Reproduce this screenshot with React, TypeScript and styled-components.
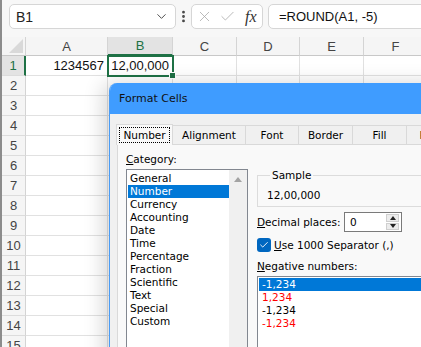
import React from "react";
import styled, { createGlobalStyle } from "styled-components";
import { X, Check, ChevronDown, EllipsisVertical } from "lucide-react";

const GlobalStyle = createGlobalStyle`
  html, body { margin: 0; padding: 0; background: #fff; }
  body { overflow: hidden; }
`;

const GREEN = "#1e7145";
const UI_FONT = `"DejaVu Sans", Tahoma, sans-serif`;

const Window = styled.div`
  position: relative;
  width: 421px;
  height: 347px;
  overflow: hidden;
  background: #fff;
  border-left: 2px solid #8c8c8c;
  box-sizing: border-box;
  font-family: "Liberation Sans", Arial, sans-serif;
  color: #111;
`;

const Toolbar = styled.div`
  display: flex;
  align-items: flex-start;
  height: 37px;
  padding: 4px 0 0 7px;
  box-sizing: border-box;
  background: #f7f7f7;
`;

const Box = styled.div<{ $w: number }>`
  display: flex;
  align-items: center;
  flex: none;
  width: ${p => p.$w}px;
  height: 25px;
  box-sizing: border-box;
  background: #fff;
  border: 1px solid #d6d6d6;
  border-radius: 5px;
  font-size: 14px;
`;

const NameBox = styled(Box)`
  justify-content: space-between;
  padding: 0 6px 0 6px;
  color: #222;
`;

const Dots = styled.div`
  width: 21px;
  height: 25px;
  display: flex;
  align-items: center;
  justify-content: center;
  color: #444;
`;

const FxBox = styled(Box)`
  padding-left: 4px;
  gap: 6px;
  color: #a8a8a8;
`;

const Fx = styled.span`
  margin-left: 3px;
  font-family: "Liberation Serif", "Times New Roman", serif;
  font-style: italic;
  font-size: 16px;
  color: #333;
`;

const FormulaBox = styled(Box)`
  margin-left: 5px;
  padding-left: 10px;
  font-size: 13px;
  color: #111;
`;

const Sheet = styled.div`
  display: grid;
  grid-template-columns: 24px 82px 65px 64px 63px 64px 64px;
  grid-template-rows: 19px repeat(15, 20px);
  font-size: 13px;
`;

const Corner = styled.div`
  position: relative;
  background: #f5f5f5;
  border-right: 1px solid #d4d4d4;
  border-bottom: 1px solid #c8c8c8;
  box-sizing: border-box;
  &::after {
    content: "";
    position: absolute;
    right: 2px;
    bottom: 2px;
    border-style: solid;
    border-width: 0 0 14px 14px;
    border-color: transparent transparent #d9d9d9 transparent;
  }
`;

const ColHead = styled.div<{ $sel?: boolean }>`
  display: flex;
  align-items: center;
  justify-content: center;
  box-sizing: border-box;
  background: ${p => (p.$sel ? "#e3e3e3" : "#f5f5f5")};
  color: ${p => (p.$sel ? GREEN : "#444")};
  border-right: 1px solid #d4d4d4;
  border-bottom: ${p => (p.$sel ? `2px solid ${GREEN}` : "1px solid #c8c8c8")};
`;

const RowHead = styled.div<{ $sel?: boolean }>`
  display: flex;
  align-items: center;
  justify-content: center;
  box-sizing: border-box;
  background: ${p => (p.$sel ? "#e3e3e3" : "#f5f5f5")};
  color: ${p => (p.$sel ? GREEN : "#444")};
  border-right: ${p => (p.$sel ? `2px solid ${GREEN}` : "1px solid #d4d4d4")};
  border-bottom: 1px solid #dcdcdc;
`;

const Cell = styled.div<{ $active?: boolean }>`
  position: relative;
  display: flex;
  align-items: center;
  justify-content: flex-end;
  padding: 0 3px;
  box-sizing: border-box;
  border-right: 1px solid #e1e1e1;
  border-bottom: 1px solid #e1e1e1;
  ${p =>
    p.$active &&
    `
    outline: 2px solid ${GREEN};
    outline-offset: -1px;
    z-index: 1;
    &::after {
      content: "";
      position: absolute;
      right: -4px;
      bottom: -4px;
      width: 5px;
      height: 5px;
      background: ${GREEN};
      border: 1px solid #fff;
    }
  `}
`;

const Dialog = styled.div`
  position: absolute;
  left: 107px;
  top: 83px;
  width: 340px;
  height: 290px;
  background: #f0f0f0;
  border-left: 1px solid #4a9cf5;
  border-top-left-radius: 8px;
  overflow: hidden;
  box-shadow: -6px 0 20px rgba(0, 0, 0, 0.16);
  font-family: ${UI_FONT};
  font-size: 10.5px;
  color: #000;
  z-index: 2;
`;

const TitleBar = styled.div`
  display: flex;
  align-items: center;
  height: 31px;
  padding-left: 9px;
  background: #3f9cff;
  color: #111;
  font-size: 11px;
`;

const Body = styled.div`
  padding: 9px 0 0 7px;
`;

const TabStrip = styled.div`
  display: flex;
  align-items: flex-end;
  height: 21px;
`;

const Tab = styled.div<{ $w: number; $sel?: boolean }>`
  display: flex;
  align-items: center;
  justify-content: center;
  flex: none;
  width: ${p => p.$w}px;
  height: ${p => (p.$sel ? 21 : 19)}px;
  box-sizing: border-box;
  border: 1px solid #d9d9d9;
  border-bottom: none;
  margin-left: -1px;
  background: ${p => (p.$sel ? "#f9f9f9" : "#f0f0f0")};
  margin-bottom: ${p => (p.$sel ? -1 : 0)}px;
  position: relative;
  z-index: ${p => (p.$sel ? 1 : 0)};
  white-space: nowrap;
`;

const Focus = styled.span`
  outline: 1px dotted #000;
  padding: 1px 3px 1px 3px;
`;

const Pane = styled.div`
  display: flex;
  height: 240px;
  padding: 8px 0 0 8px;
  border: 1px solid #d9d9d9;
  background: #f9f9f9;
`;

const LeftCol = styled.div`
  display: flex;
  flex-direction: column;
  width: 122px;
  flex: none;
`;

const Label = styled.div<{ $w?: number }>`
  line-height: 13px;
  height: 13px;
  white-space: nowrap;
  ${p => (p.$w ? `width: ${p.$w}px;` : "")}
`;

const ListBox = styled.div<{ $h: number; $pt: number }>`
  display: flex;
  height: ${p => p.$h}px;
  margin-top: 3px;
  box-sizing: border-box;
  border: 1px solid #828790;
  background: #fff;
  padding: ${p => p.$pt}px 0 0 1px;
`;

const Items = styled.div<{ $w?: number }>`
  display: flex;
  flex-direction: column;
  width: ${p => (p.$w ? `${p.$w}px` : "100%")};
`;

const Item = styled.div<{ $sel?: boolean; $red?: boolean; $pl: number }>`
  height: 13px;
  line-height: 13px;
  padding-left: ${p => p.$pl}px;
  white-space: nowrap;
  background: ${p => (p.$sel ? "#0078d7" : "transparent")};
  color: ${p => (p.$sel ? "#fff" : p.$red ? "#ff0000" : "#000")};
`;

const ScrollBar = styled.div`
  flex: 1;
  margin-top: -2px;
  background: #f0f0f0;
  display: flex;
  justify-content: center;
  padding-top: 7px;
  &::before {
    content: "";
    border-style: solid;
    border-width: 0 4px 5px 4px;
    border-color: transparent transparent #a3a3a3 transparent;
    height: 0;
  }
`;

const RightCol = styled.div`
  display: flex;
  flex-direction: column;
  margin-left: 9px;
  flex: 1;
`;

const Group = styled.fieldset`
  margin: 16px 0 0 0;
  padding: 7px 0 4px 9px;
  min-inline-size: auto;
  border: 1px solid #dcdcdc;
  line-height: 13px;
  & > legend {
    padding: 0 2px;
    margin-left: 3px;
    line-height: 13px;
  }
`;

const FieldRow = styled.div<{ $mt: number }>`
  display: flex;
  align-items: center;
  margin-top: ${p => p.$mt}px;
`;

const Spin = styled.div`
  display: flex;
  align-items: center;
  width: 58px;
  height: 20px;
  box-sizing: border-box;
  border: 1px solid #7a7a7a;
  background: #fff;
  padding-left: 5px;
  justify-content: space-between;
`;

const SpinButtons = styled.div`
  display: flex;
  flex-direction: column;
  width: 13px;
  height: 16px;
  margin-right: 2px;
  gap: 1px;
`;

const SpinButton = styled.div<{ $up?: boolean }>`
  flex: 1;
  display: flex;
  align-items: center;
  justify-content: center;
  background: #ececec;
  border: 1px solid #cfcfcf;
  box-sizing: border-box;
  &::before {
    content: "";
    border-style: solid;
    border-width: ${p => (p.$up ? "0 3.5px 4px 3.5px" : "4px 3.5px 0 3.5px")};
    border-color: ${p =>
      p.$up ? "transparent transparent #222 transparent" : "#222 transparent transparent transparent"};
  }
`;

const CheckBox = styled.div`
  width: 14px;
  height: 14px;
  border-radius: 3px;
  background: #0067c0;
  display: flex;
  align-items: center;
  justify-content: center;
  margin-right: 3px;
  color: #fff;
`;

const categories = [
  "General",
  "Number",
  "Currency",
  "Accounting",
  "Date",
  "Time",
  "Percentage",
  "Fraction",
  "Scientific",
  "Text",
  "Special",
  "Custom",
];

const negatives = [
  { text: "-1,234", red: false },
  { text: "1,234", red: true },
  { text: "-1,234", red: false },
  { text: "-1,234", red: true },
];

const tabs = [
  { label: "Number", w: 57 },
  { label: "Alignment", w: 74 },
  { label: "Font", w: 54 },
  { label: "Border", w: 55 },
  { label: "Fill", w: 55 },
  { label: "Protection", w: 80 },
];

const columns = ["A", "B", "C", "D", "E", "F"];

const App = () => {
  const rows = Array.from({ length: 15 }, (_, i) => i + 1);
  return (
    <Window>
      <GlobalStyle />
      <Toolbar>
        <NameBox $w={167}>
          <span>B1</span>
          <ChevronDown size={15} strokeWidth={1.5} color="#444" />
        </NameBox>
        <Dots>
          <EllipsisVertical size={15} strokeWidth={2.5} />
        </Dots>
        <FxBox $w={72}>
          <X size={17} strokeWidth={1.1} />
          <Check size={17} strokeWidth={1.1} />
          <Fx>fx</Fx>
        </FxBox>
        <FormulaBox $w={200}>=ROUND(A1, -5)</FormulaBox>
      </Toolbar>

      <Sheet>
        <Corner />
        {columns.map(c => (
          <ColHead key={c} $sel={c === "B"}>
            {c}
          </ColHead>
        ))}
        {rows.map(r => (
          <React.Fragment key={r}>
            <RowHead $sel={r === 1}>{r}</RowHead>
            {columns.map(c => (
              <Cell key={c} $active={r === 1 && c === "B"}>
                {r === 1 && c === "A" ? "1234567" : r === 1 && c === "B" ? "12,00,000" : ""}
              </Cell>
            ))}
          </React.Fragment>
        ))}
      </Sheet>

      <Dialog>
        <TitleBar>Format Cells</TitleBar>
        <Body>
          <TabStrip>
            {tabs.map((t, i) => (
              <Tab key={t.label} $w={t.w} $sel={i === 0}>
                {i === 0 ? <Focus>{t.label}</Focus> : t.label}
              </Tab>
            ))}
          </TabStrip>
          <Pane>
            <LeftCol>
              <Label>
                <u>C</u>ategory:
              </Label>
              <ListBox $h={190} $pt={2}>
                <Items $w={101}>
                  {categories.map(c => (
                    <Item key={c} $pl={2} $sel={c === "Number"}>
                      {c}
                    </Item>
                  ))}
                </Items>
                <ScrollBar />
              </ListBox>
            </LeftCol>
            <RightCol>
              <Group>
                <legend>Sample</legend>
                12,00,000
              </Group>
              <FieldRow $mt={5}>
                <Label $w={87}>
                  <u>D</u>ecimal places:
                </Label>
                <Spin>
                  <span>0</span>
                  <SpinButtons>
                    <SpinButton $up />
                    <SpinButton />
                  </SpinButtons>
                </Spin>
              </FieldRow>
              <FieldRow $mt={6}>
                <CheckBox>
                  <Check size={10} strokeWidth={2.2} />
                </CheckBox>
                <Label>
                  <u>U</u>se 1000 Separator (,)
                </Label>
              </FieldRow>
              <FieldRow $mt={8}>
                <Label>
                  <u>N</u>egative numbers:
                </Label>
              </FieldRow>
              <ListBox $h={100} $pt={1}>
                <Items>
                  {negatives.map((n, i) => (
                    <Item key={i} $pl={3} $sel={i === 0} $red={n.red}>
                      {n.text}
                    </Item>
                  ))}
                </Items>
              </ListBox>
            </RightCol>
          </Pane>
        </Body>
      </Dialog>
    </Window>
  );
};

export default App;
